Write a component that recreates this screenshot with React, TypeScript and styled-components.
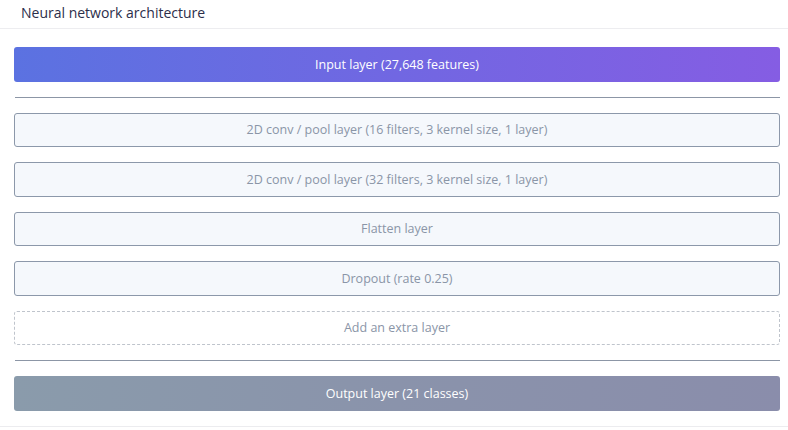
import { createGlobalStyle } from "styled-components";
import styled from "styled-components";

const GlobalStyle = createGlobalStyle`
  html, body {
    margin: 0;
    padding: 0;
    background: #ffffff;
  }
  body {
    font-family: "Open Sans", "Noto Sans", sans-serif;
  }
`;

const Card = styled.div`
  width: 788px;
  height: 427px;
  box-sizing: border-box;
  background: #ffffff;
  border-bottom: 1px solid #ececef;
  overflow: hidden;
`;

const Header = styled.div`
  height: 29px;
  box-sizing: border-box;
  padding: 3px 0 0 21px;
  border-bottom: 1px solid #ededf0;
  color: #2c2e4a;
  font-size: 14px;
  font-weight: 500;
  line-height: 20px;
`;

const Body = styled.div`
  display: flex;
  flex-direction: column;
  padding: 18px 8px 0 14px;
`;

const Layer = styled.div<{ $kind: "input" | "hidden" | "add" | "output" }>`
  height: 34.5px;
  box-sizing: border-box;
  display: flex;
  align-items: center;
  justify-content: center;
  border-radius: 3px;
  font-size: 12.5px;
  margin-bottom: ${(p) => (p.$kind === "hidden" ? "15px" : "0")};
  ${(p) =>
    p.$kind === "input" &&
    `
    background: linear-gradient(90deg, #5b72e1 0%, #7167e2 50%, #855de3 100%);
    color: #ffffff;
  `}
  ${(p) =>
    p.$kind === "output" &&
    `
    background: linear-gradient(90deg, #8a9bab 0%, #8a93ab 50%, #8a8dab 100%);
    color: #ffffff;
  `}
  ${(p) =>
    p.$kind === "hidden" &&
    `
    background: #f5f8fc;
    border: 1px solid #8c98aa;
    color: #8a95a7;
  `}
  ${(p) =>
    p.$kind === "add" &&
    `
    background: #ffffff;
    border: 1px dashed #bfc4cc;
    color: #8a95a7;
  `}
`;

const Divider = styled.div`
  height: 1px;
  background: #8c96a6;
  margin: 15px 0 15px 1px;
`;

const hidden = [
  "2D conv / pool layer (16 filters, 3 kernel size, 1 layer)",
  "2D conv / pool layer (32 filters, 3 kernel size, 1 layer)",
  "Flatten layer",
  "Dropout (rate 0.25)",
];

export default function App() {
  return (
    <>
      <GlobalStyle />
      <Card>
        <Header>Neural network architecture</Header>
        <Body>
          <Layer $kind="input">Input layer (27,648 features)</Layer>
          <Divider />
          {hidden.map((h) => (
            <Layer key={h} $kind="hidden">
              {h}
            </Layer>
          ))}
          <Layer $kind="add">Add an extra layer</Layer>
          <Divider />
          <Layer $kind="output">Output layer (21 classes)</Layer>
        </Body>
      </Card>
    </>
  );
}
